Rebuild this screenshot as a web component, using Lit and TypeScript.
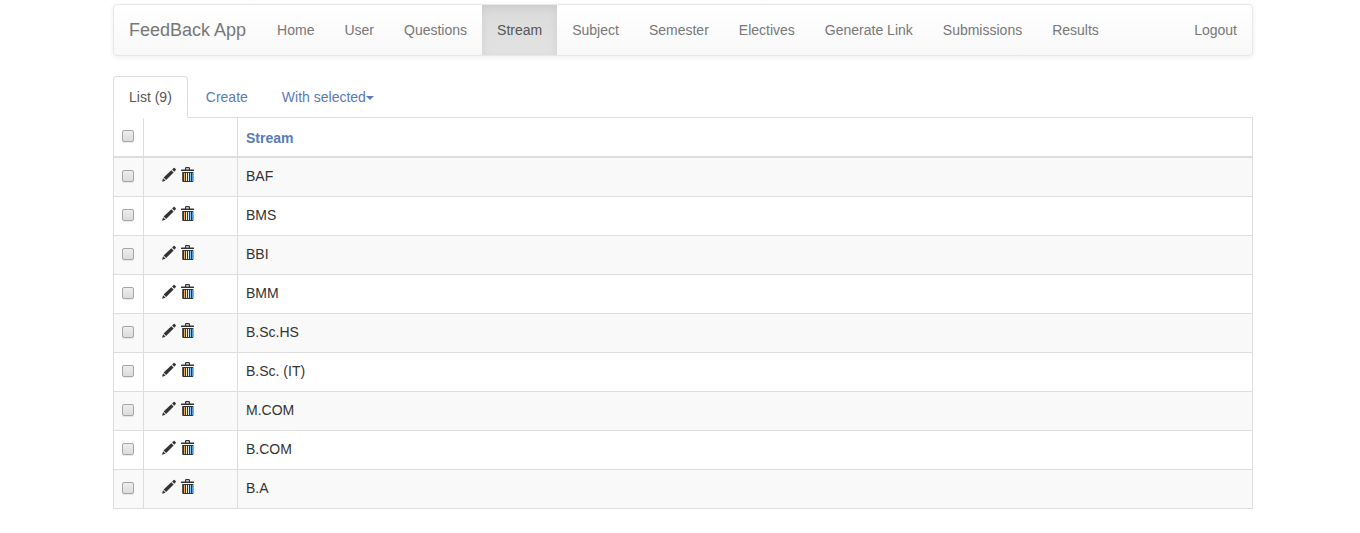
import { LitElement, html, css, svg } from "lit";
import { customElement, state } from "lit/decorators.js";

const pencil = svg`
  <path d="M0 14.8 L1.1 11.2 L3.6 13.7 Z" />
  <path d="M1.6 10.5 L9.3 3.2 L11.6 5.5 L4.1 13 Z" />
  <path d="M10.1 2.5 L11.6 1 Q12.1 0.6 12.6 1 L13.8 2.2 Q14.2 2.6 13.8 3.1 L12.3 4.7 Z" />`;

const trash = svg`
  <rect x="3" y="6" width="1" height="8" fill="#f2a763" />
  <rect x="5" y="6" width="1" height="8" fill="#f8ebb5" />
  <rect x="7" y="6" width="1" height="8" fill="#d5eefa" />
  <rect x="9" y="6" width="1" height="8" fill="#8cc8f8" />
  <rect x="11" y="6" width="1" height="8" fill="#4f94dd" />
  <path d="M4 2.6 V1.2 Q4 0 5.2 0 H7.8 Q9 0 9 1.2 V2.6 H12.5 Q13 2.6 13 3.2 V4 H0 V3.2 Q0 2.6 0.5 2.6 Z M5.2 2.6 H7.8 V1.2 H5.2 Z" fill-rule="evenodd" />
  <path d="M1.2 5 H12.4 V14 Q12.4 15 11.4 15 H2.2 Q1.2 15 1.2 14 Z M3 6 V14 H4 V6 Z M5 6 V14 H6 V6 Z M7 6 V14 H8 V6 Z M9 6 V14 H10 V6 Z M11 6 V14 H12 V6 Z" fill-rule="evenodd" />`;

@customElement("app-root")
export class AppRoot extends LitElement {
  @state() private streams = [
    "BAF", "BMS", "BBI", "BMM", "B.Sc.HS", "B.Sc. (IT)", "M.COM", "B.COM", "B.A",
  ];
  @state() private selected: string[] = [];

  private pages = [
    "Home", "User", "Questions", "Stream", "Subject", "Semester",
    "Electives", "Generate Link", "Submissions", "Results",
  ];

  static styles = css`
    :host {
      display: block;
      padding: 4px 107px 20px 113px;
      font: 14px/20px "Liberation Sans", Arial, sans-serif;
      color: #333;
      background: #fff;
    }
    *, *::before, *::after { box-sizing: border-box; }
    a { color: #5a7ab8; text-decoration: none; }
    button {
      padding: 0;
      border: 0;
      background: none;
      font: inherit;
      color: inherit;
      cursor: pointer;
    }
    .navbar {
      display: flex;
      margin-bottom: 20px;
      border: 1px solid #e7e7e7;
      border-radius: 4px;
      background: linear-gradient(#fff, #f8f8f8);
      box-shadow: inset 0 1px 0 rgba(255, 255, 255, 0.15), 0 1px 5px rgba(0, 0, 0, 0.075);
    }
    .navbar a {
      padding: 15px;
      color: #777;
      white-space: nowrap;
    }
    .navbar .brand { padding-right: 16px; font-size: 18px; }
    .navbar .active {
      color: #555;
      background: linear-gradient(#dbdbdb, #e2e2e2);
      box-shadow: inset 0 3px 9px rgba(0, 0, 0, 0.075);
    }
    .logout { margin-left: auto; }
    .tabs {
      display: flex;
      gap: 2px;
      border-bottom: 1px solid #ddd;
    }
    .tab {
      margin-bottom: -1px;
      padding: 10px 15px;
      border: 1px solid transparent;
      border-radius: 4px 4px 0 0;
      color: #5a7ab8;
    }
    .tab.current {
      border-color: #ddd #ddd #fff;
      background: #fff;
      color: #555;
    }
    .caret {
      display: inline-block;
      border: 4px solid transparent;
      border-top-color: currentColor;
      border-bottom: 0;
      vertical-align: middle;
    }
    table {
      width: 100%;
      border-spacing: 0;
      border-left: 1px solid #ddd;
    }
    th, td {
      height: 39px;
      padding: 8px;
      border: solid #ddd;
      border-width: 0 1px 1px 0;
      text-align: left;
      vertical-align: top;
    }
    th {
      height: 40px;
      border-bottom-width: 2px;
      vertical-align: bottom;
    }
    tbody tr:nth-child(odd) { background: #f9f9f9; }
    .check { width: 30px; vertical-align: top; }
    .tools { width: 94px; }
    input {
      display: block;
      appearance: none;
      width: 12px;
      height: 12px;
      margin: 4px 0;
      border: 1px solid #a6a6a6;
      border-radius: 2px;
      background: linear-gradient(#ededed, #dcdcdc);
      box-shadow: 0 1px 0 rgba(0, 0, 0, 0.08);
    }
    input:checked { background: #5a7ab8; }
    .actions {
      display: flex;
      gap: 4px;
      padding-left: 10px;
    }
    .actions a, .actions button { display: block; color: #333; }
    svg {
      display: block;
      width: 15px;
      height: 15px;
      margin-top: 1px;
      fill: currentColor;
    }
  `;

  private toggle(name: string) {
    this.selected = this.selected.includes(name)
      ? this.selected.filter((s) => s !== name)
      : [...this.selected, name];
  }

  private toggleAll() {
    this.selected = this.selected.length === this.streams.length ? [] : [...this.streams];
  }

  private remove(name: string) {
    this.streams = this.streams.filter((s) => s !== name);
    this.selected = this.selected.filter((s) => s !== name);
  }

  render() {
    return html`
      <nav class="navbar">
        <a class="brand" href="#">FeedBack App</a>
        ${this.pages.map((p) => html`<a class=${p === "Stream" ? "active" : ""} href="#">${p}</a>`)}
        <a class="logout" href="#">Logout</a>
      </nav>
      <main>
        <div class="tabs">
          <a class="tab current" href="#">List (${this.streams.length})</a>
          <a class="tab" href="#">Create</a>
          <button class="tab" aria-haspopup="menu">With selected<span class="caret"></span></button>
        </div>
        <table>
          <thead>
            <tr>
              <th class="check">
                <input type="checkbox" aria-label="Select all records"
                  .checked=${this.selected.length > 0 && this.selected.length === this.streams.length}
                  @change=${this.toggleAll} />
              </th>
              <th class="tools"></th>
              <th><a href="#">Stream</a></th>
            </tr>
          </thead>
          <tbody>
            ${this.streams.map((name) => html`
              <tr>
                <td class="check">
                  <input type="checkbox" aria-label="Select ${name}"
                    .checked=${this.selected.includes(name)}
                    @change=${() => this.toggle(name)} />
                </td>
                <td class="tools">
                  <div class="actions">
                    <a href="#" aria-label="Edit ${name}"><svg viewBox="0 0 15 15">${pencil}</svg></a>
                    <button aria-label="Delete ${name}" @click=${() => this.remove(name)}>
                      <svg viewBox="0 0 15 15">${trash}</svg>
                    </button>
                  </div>
                </td>
                <td>${name}</td>
              </tr>`)}
          </tbody>
        </table>
      </main>
    `;
  }
}
